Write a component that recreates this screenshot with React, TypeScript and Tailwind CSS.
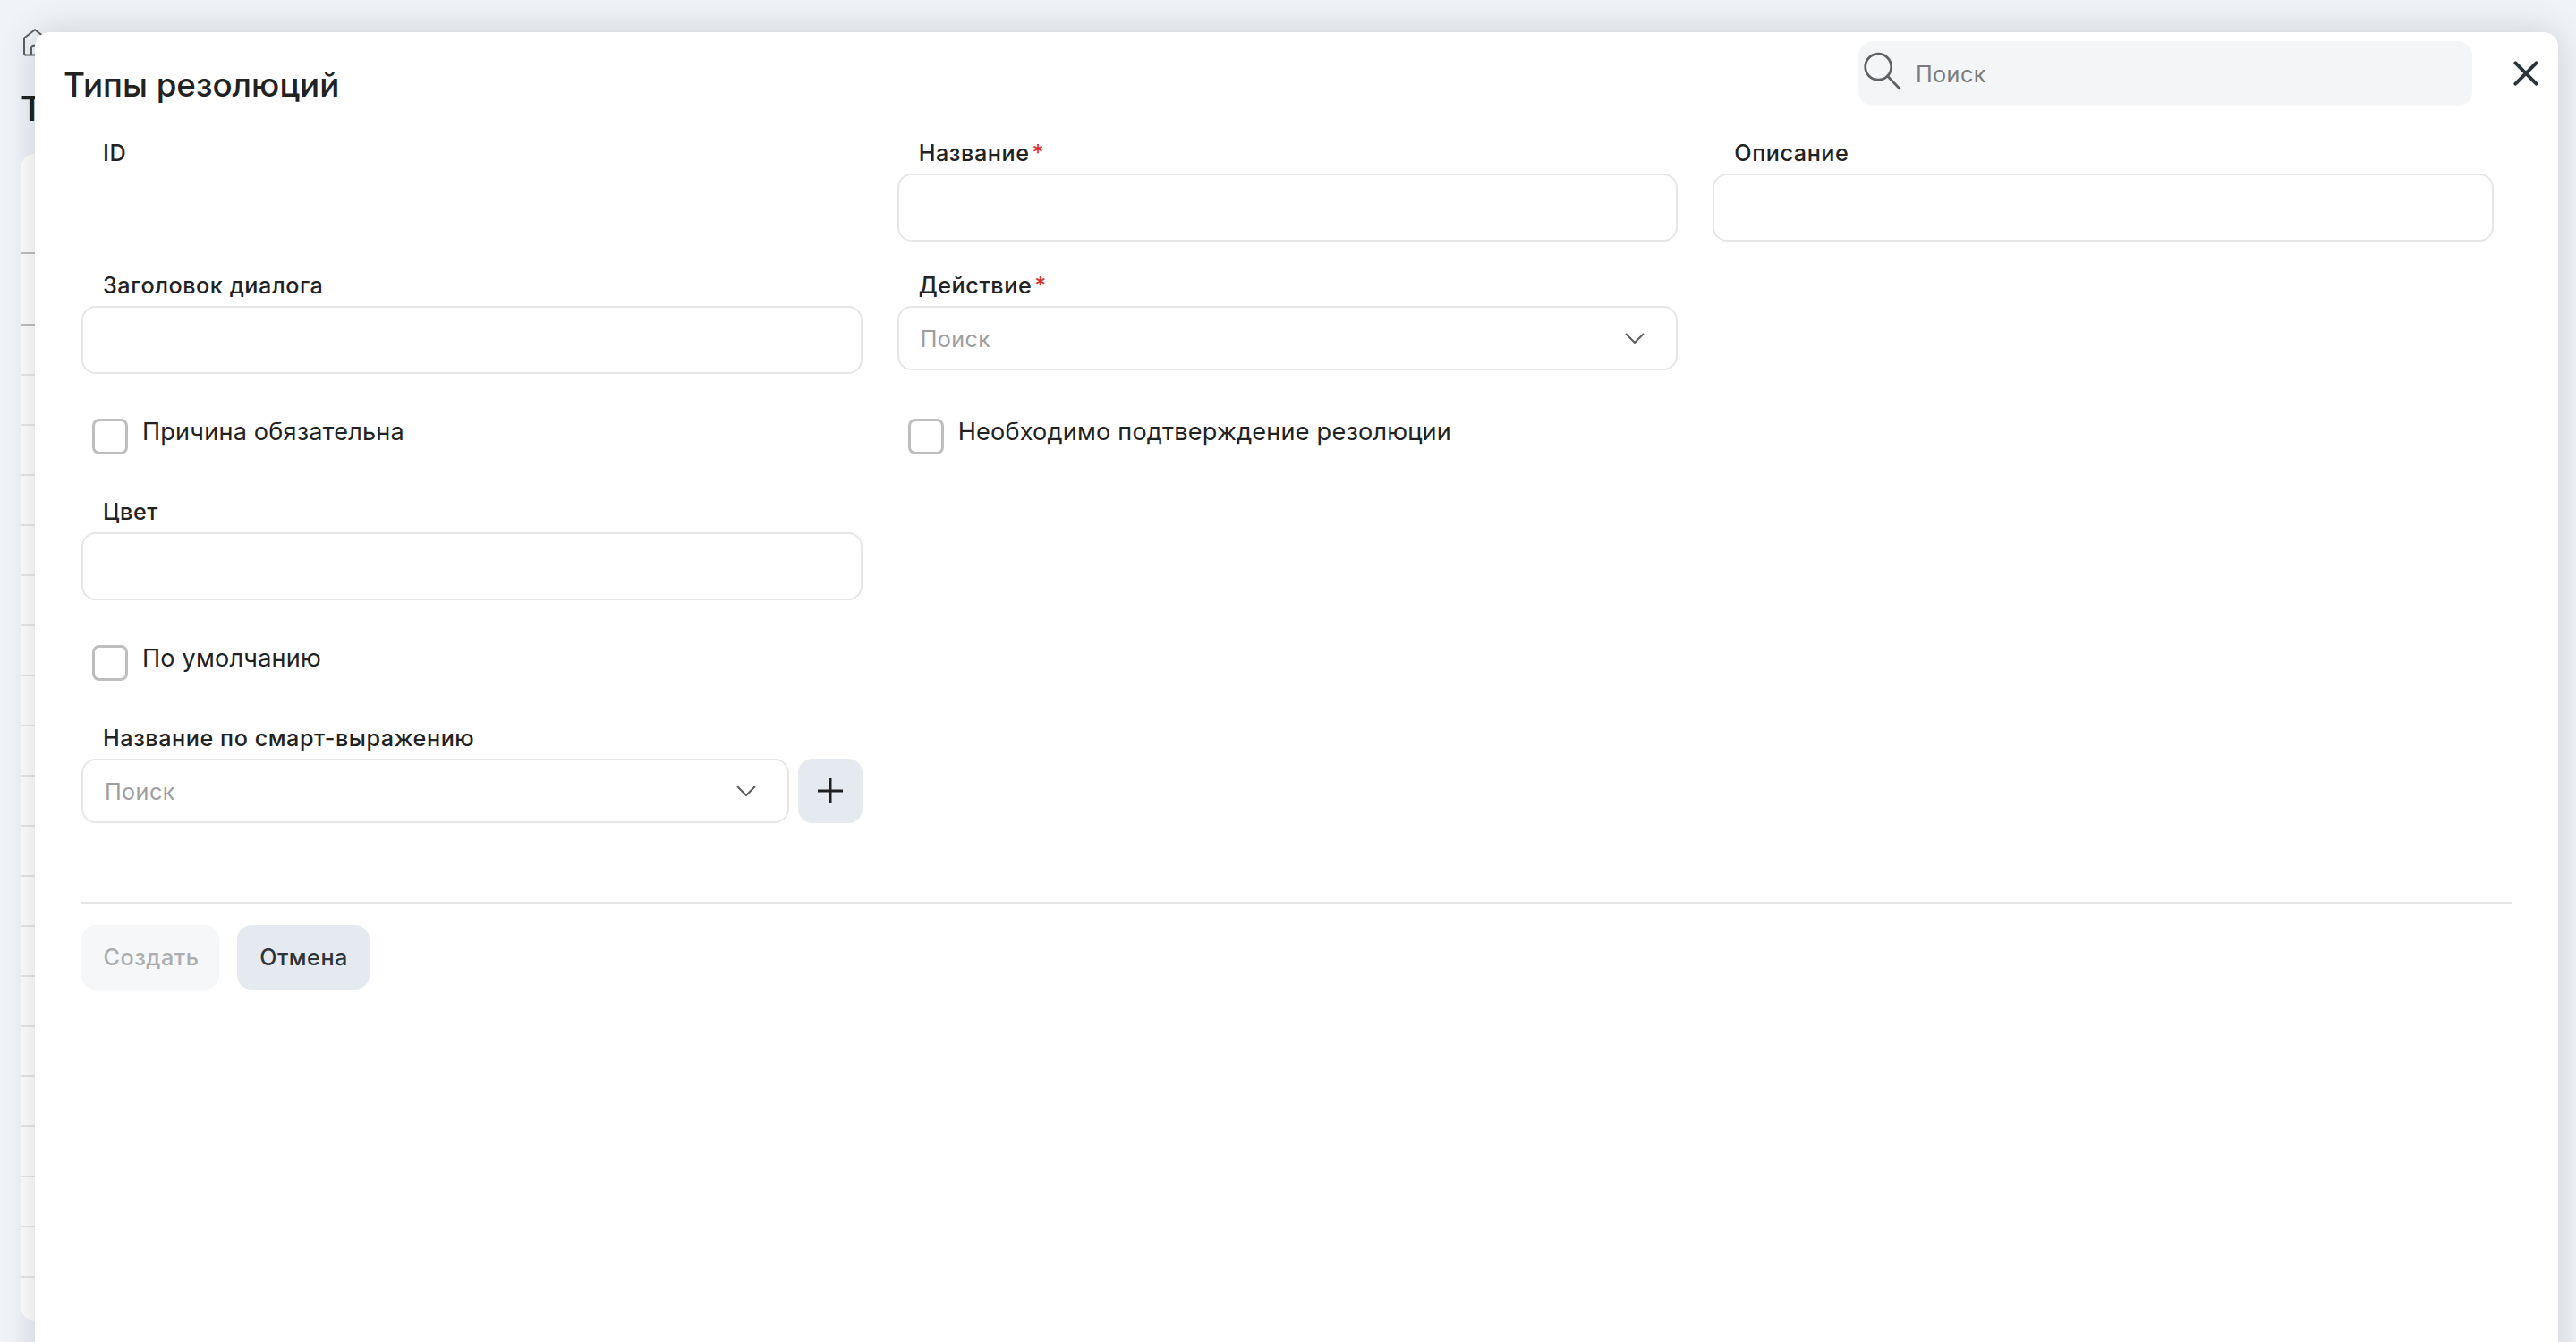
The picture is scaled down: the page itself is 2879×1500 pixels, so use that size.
import React from 'react';

function Label({ text, required = false }: { text: string; required?: boolean }) {
  return (
    <div className="flex h-[30px] items-center pl-[24px] text-[25.2px] leading-[30px] font-medium tracking-[0.55px] whitespace-nowrap">
      <span>{text}</span>
      {required && <span className="ml-[3px] text-[#dc2f2f]">*</span>}
    </div>
  );
}

function TextField({ label, required }: { label: string; required?: boolean }) {
  return (
    <div className="flex flex-col gap-2">
      <Label text={label} required={required} />
      <div className="h-[76px] rounded-2xl border-2 border-[#e6e6e6] bg-white" />
    </div>
  );
}

function Chevron() {
  return (
    <svg className="mr-[34px] h-6 w-6" viewBox="0 0 24 24" fill="none" stroke="#5f6163" strokeWidth="2.2">
      <path d="M2 7 L12 17 L22 7" />
    </svg>
  );
}

function SelectField({ label, required, addable = false }: { label: string; required?: boolean; addable?: boolean }) {
  return (
    <div className="flex flex-col gap-2">
      <Label text={label} required={required} />
      <div className="flex gap-[10px]">
        <div className="flex h-[72px] flex-1 items-center justify-between rounded-2xl border-2 border-[#e6e6e6] bg-white pl-[24px]">
          <span className="pt-[3px] text-[25.2px] tracking-[0.4px] text-[#9e9e9e]">Поиск</span>
          <Chevron />
        </div>
        {addable && (
          <button className="flex size-[72px] items-center justify-center rounded-2xl bg-[#e5eaf1]">
            <svg className="size-7" viewBox="0 0 28 28" stroke="#1f1f1f" strokeWidth="3">
              <path d="M14 0V28M0 14H28" />
            </svg>
          </button>
        )}
      </div>
    </div>
  );
}

function CheckField({ label }: { label: string }) {
  return (
    <div className="flex h-[71px] gap-4 pt-4 pl-3">
      <div className="size-10 shrink-0 rounded-lg border-[3px] border-[#bdbebf] bg-white" />
      <span className="-mt-[1px] text-[27.1px] leading-8 tracking-[0.2px] whitespace-nowrap">{label}</span>
    </div>
  );
}

const tableRows = Array.from({ length: 19 }, (_, i) => i);

function BackgroundPage() {
  return (
    <div className="flex h-[1500px] flex-col pt-[31px] pl-[23px]">
      <svg className="ml-[2px] h-8 w-7 shrink-0" viewBox="0 0 28 32" fill="none" stroke="#5d5f61" strokeWidth="2">
        <path d="M2 11.5 L14 2.2 L26 11.5 V28.5 Q26 30.6 24 30.6 H4 Q2 30.6 2 28.5 Z" />
        <path d="M10 30.5 V23 Q10 19.8 13 19.8 H15 Q18 19.8 18 23 V30.5" />
      </svg>
      <div className="mt-[34px] h-12 text-[38px] leading-[48px] font-semibold">Т</div>
      <div className="mt-[27px] h-[1304px] w-[2833px] shrink-0 overflow-hidden rounded-2xl bg-white">
        <div className="h-[112px] border-b-2 border-[#bfbfbf]" />
        <div className="h-[80px] border-b-2 border-[#bfbfbf]" />
        {tableRows.map((r) => (
          <div key={r} className="h-14 border-b-2 border-[#e8e8e8]" />
        ))}
      </div>
    </div>
  );
}

export default function App() {
  return (
    <div className="relative h-[1500px] w-[2879px] overflow-hidden bg-[#f0f4f8] font-[Inter,sans-serif] text-[#222222]">
      <BackgroundPage />
      <div className="absolute top-9 left-[39px] flex h-[1600px] w-[2820px] flex-col rounded-2xl bg-white shadow-[0_0_40px_rgba(0,0,0,0.16)]">
        <header className="flex h-[120px] items-start pl-[32px]">
          <h1 className="mt-[35px] text-[36.75px] leading-[48px] font-medium">Типы резолюций</h1>
          <div className="mt-[10px] mr-[46px] ml-auto flex h-[72px] w-[686px] items-center rounded-2xl bg-[#f3f5f7]">
            <svg className="-mt-1 ml-[4px] h-12 w-12" viewBox="0 0 48 48" fill="none" stroke="#5f6265" strokeWidth="2.7" strokeLinecap="round">
              <circle cx="18.2" cy="18.7" r="14.5" />
              <path d="M28.5 29 L42.2 43.2" />
            </svg>
            <span className="ml-[12px] pt-[3px] text-[25.2px] tracking-[0.4px] text-[#7b7b7b]">Поиск</span>
          </div>
          <svg className="mt-[32px] mr-[22px] size-7" viewBox="0 0 28 28" stroke="#2d343a" strokeWidth="4" strokeLinecap="round">
            <path d="M2.4 2.4 L25.6 25.6 M25.6 2.4 L2.4 25.6" />
          </svg>
        </header>

        <main className="flex flex-col pl-[52px]">
          <div className="grid w-[2696px] grid-cols-3 gap-x-[39px] gap-y-[34px]">
            <Label text="ID" />
            <TextField label="Название" required />
            <TextField label="Описание" />
            <TextField label="Заголовок диалога" />
            <SelectField label="Действие" required />
            <div />
            <CheckField label="Причина обязательна" />
            <CheckField label="Необходимо подтверждение резолюции" />
            <div />
            <TextField label="Цвет" />
            <div />
            <div />
            <CheckField label="По умолчанию" />
            <div />
            <div />
            <SelectField label="Название по смарт-выражению" addable />
          </div>

          <div className="mt-[88px] flex w-[2716px] gap-5 border-t-2 border-[#e6e6e6] pt-6 text-[25.2px] font-medium tracking-[0.5px]">
            <button className="h-[72px] w-[154px] rounded-2xl bg-[#f5f7f9] pt-[2px] pl-[2px] text-[#acadae]">Создать</button>
            <button className="h-[72px] w-[148px] rounded-2xl bg-[#e5eaf1] pt-[2px] pl-[1px] text-[#2d343a]">Отмена</button>
          </div>
        </main>
      </div>
    </div>
  );
}
